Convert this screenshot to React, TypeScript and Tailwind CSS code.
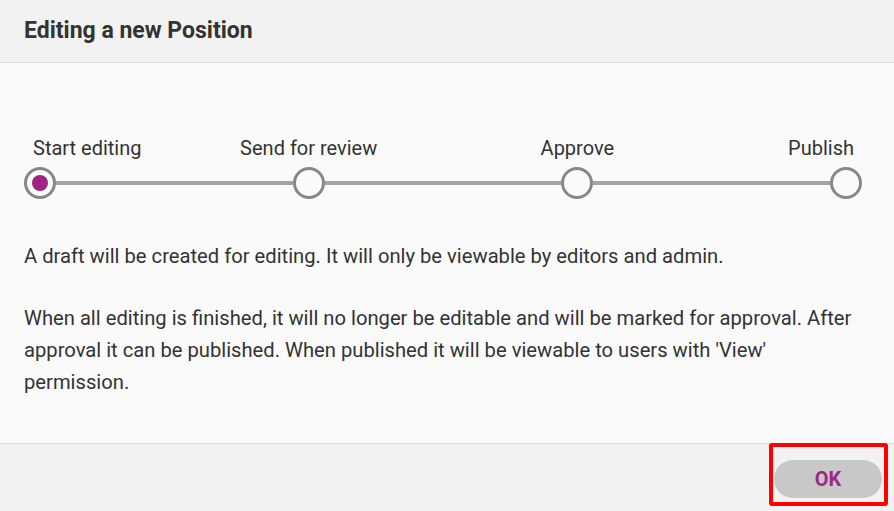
import React from "react";

const steps = ["Start editing", "Send for review", "Approve", "Publish"];

function Circle({ active }: { active?: boolean }) {
  return (
    <div className="w-8 h-8 shrink-0 rounded-full border-[3px] border-[#878787] bg-[#fafafa] flex items-center justify-center">
      {active && <div className="w-4 h-4 rounded-full bg-[#a0237f]" />}
    </div>
  );
}

export default function App() {
  return (
    <div
      className="w-[894px] h-[511px] flex flex-col bg-[#fafafa] text-[#333333] overflow-hidden"
      style={{ fontFamily: "Roboto, 'Liberation Sans', sans-serif" }}
    >
      <div className="h-[63px] shrink-0 bg-[#f2f2f2] border-b border-[#dcdcdc] flex items-center px-6">
        <h1 className="text-[23px] font-bold text-[#333333] leading-none pb-[1px]">Editing a new Position</h1>
      </div>

      <div className="h-[380px] shrink-0 bg-[#fafafa] pl-6 pr-9 pt-[72px]">
        <div className="w-[838px]">
          <div className="flex h-[26px] items-center text-[20px] leading-[26px] text-[#333333]">
            <div className="w-8 flex flex-col items-start">
              <span className="whitespace-nowrap ml-[9px]">{steps[0]}</span>
            </div>
            <div className="flex-1" />
            <div className="w-8 flex flex-col items-center">
              <span className="whitespace-nowrap">{steps[1]}</span>
            </div>
            <div className="flex-1" />
            <div className="w-8 flex flex-col items-center">
              <span className="whitespace-nowrap">{steps[2]}</span>
            </div>
            <div className="flex-1" />
            <div className="w-8 flex flex-col items-end">
              <span className="whitespace-nowrap mr-2">{steps[3]}</span>
            </div>
          </div>
          <div className="flex items-center mt-[6px]">
            <Circle active />
            <div className="flex-1 h-1 bg-[#a3a3a3]" />
            <Circle />
            <div className="flex-1 h-1 bg-[#a3a3a3]" />
            <Circle />
            <div className="flex-1 h-1 bg-[#a3a3a3]" />
            <Circle />
          </div>
        </div>

        <div className="mt-[41px] text-[20.2px] leading-8 text-[#333333]">
          <p>A draft will be created for editing. It will only be viewable by editors and admin.</p>
          <p className="mt-[30px]">
            When all editing is finished, it will no longer be editable and will be marked for approval. After
            approval it can be published. When published it will be viewable to users with 'View' permission.
          </p>
        </div>
      </div>

      <div className="flex-1 bg-[#f2f2f2] border-t border-[#dcdcdc] flex justify-end items-start pt-4 pr-3">
        <div className="relative">
          <button className="w-[108px] h-[38px] rounded-full bg-[#c8c8c8] text-[#9c2a83] font-bold text-[20px] flex items-center justify-center">
            OK
          </button>
          <span className="absolute -left-[5px] -right-[6px] -top-[17px] -bottom-[8px] border-4 border-[#ff0000] rounded-[3px] pointer-events-none" />
        </div>
      </div>
    </div>
  );
}
